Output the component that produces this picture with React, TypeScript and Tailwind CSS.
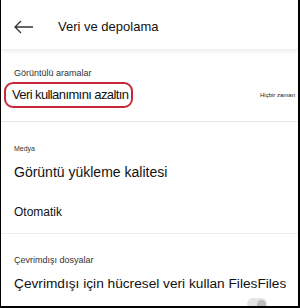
import React from "react";

const App: React.FC = () => {
  return (
    <div
      className="w-[300px] h-[308px] bg-white overflow-hidden border-l border-r-2 border-b-2 border-black"
      style={{ fontFamily: "'Liberation Sans', Arial, sans-serif" }}
    >
      {/* Header */}
      <div className="h-[50px] pt-[4px] flex items-center shadow-[0_2px_3px_rgba(0,0,0,0.06)] border-b border-[#f0f0f0]">
        <svg width="20" height="14" viewBox="0 0 20 14" className="ml-[13px]">
          <path d="M1 7h18M7 1L1 7l6 6" fill="none" stroke="#333" strokeWidth="1.3" />
        </svg>
        <div className="ml-[24px] text-[13px] text-[#111]">Veri ve depolama</div>
      </div>

      {/* Görüntülü aramalar */}
      <div className="pt-[18px] pb-[13px] border-b border-[#e6e6e6]">
        <div className="px-[13px] text-[9px] text-[#333] leading-[11px]">Görüntülü aramalar</div>
        <div className="flex items-center justify-between pr-[3px] mt-[3px]">
          <div className="ml-[3px] h-[26px] pl-[6px] pr-[3px] flex items-center rounded-[9px] border-2 border-[#c8283a] text-[13px] tracking-[-0.6px] text-[#111]">
            Veri kullanımını azaltın
          </div>
          <div className="text-[6px] text-[#222]">Hiçbir zaman</div>
        </div>
      </div>

      {/* Medya */}
      <div className="px-[13px] pt-[22px] pb-[14px] border-b border-[#ececec]">
        <div className="text-[7px] text-[#333] leading-[9px]">Medya</div>
        <div className="mt-[10px] text-[14px] text-[#111] leading-[18px]">Görüntü yükleme kalitesi</div>
        <div className="mt-[24px] text-[12px] text-[#111] leading-[14px]">Otomatik</div>
      </div>

      {/* Çevrimdışı dosyalar */}
      <div className="px-[13px] pt-[21px]">
        <div className="text-[9px] text-[#333] leading-[11px]">Çevrimdışı dosyalar</div>
        <div className="mt-[9px] text-[13.7px] text-[#111] leading-[18px] whitespace-nowrap">
          Çevrimdışı için hücresel veri kullan FilesFiles
        </div>
        <div className="flex justify-end pr-[18px] mt-[5px]">
          <div className="w-[20px] h-[12px] rounded-full bg-[#e4e4e4] flex justify-end items-center pr-[1px]">
            <div className="w-[9px] h-[9px] rounded-full bg-[#bdbdbd]" />
          </div>
        </div>
      </div>
    </div>
  );
};

export default App;
